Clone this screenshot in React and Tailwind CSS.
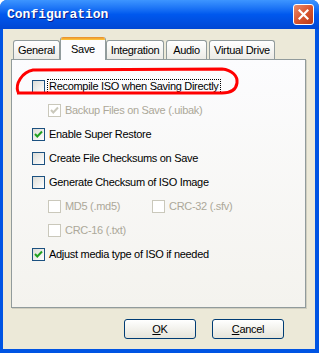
import React from "react";

function Check({ checked, disabled }) {
  return (
    <span
      className={
        "relative flex h-[13px] w-[13px] shrink-0 items-center justify-center border " +
        (disabled
          ? "border-[#CAC8BB] bg-white"
          : "border-[#1C5180] bg-gradient-to-br from-[#DCDCD7] to-[#FFFFFF]")
      }
    >
      {checked && (
        <svg width="11" height="11" viewBox="0 0 11 11">
          <path
            d="M2 5 L4.3 7.5 L9 2.5"
            fill="none"
            stroke={disabled ? "#CAC8BB" : "#21A121"}
            strokeWidth="2"
          />
        </svg>
      )}
    </span>
  );
}

function Row({ label, checked, disabled, focus, indent }) {
  return (
    <div className={"flex h-[24px] items-center whitespace-nowrap " + (indent ? "pl-[36px]" : "pl-[20px]")}>
      <Check checked={checked} disabled={disabled} />
      <span
        className={
          "ml-[2px] px-[1px] leading-[13px] " +
          (disabled ? "text-[#ACA899] " : "text-black ") +
          (focus ? "border border-dotted border-black" : "border border-transparent")
        }
      >
        {label}
      </span>
    </div>
  );
}

function Tab({ label, selected, w, ml }) {
  if (selected) {
    return (
      <div
        className={"relative z-10 -mb-[1px] flex h-[23px] flex-col overflow-hidden rounded-t-[3px] border-x border-[#919B9C] bg-[#FCFCFE] " + ml + " " + w}
      >
        <div className="h-[3px] bg-gradient-to-b from-[#E68B2C] to-[#FFC83C]" />
        <div className="flex flex-1 items-center justify-center pb-[2px]">{label}</div>
      </div>
    );
  }
  return (
    <div
      className={
        "flex h-[19px] items-center justify-center rounded-t-[3px] border-x border-t border-[#919B9C] bg-gradient-to-b from-[#FFFFFF] to-[#ECEBE6] " +
        ml +
        " " +
        w
      }
    >
      {label}
    </div>
  );
}

function Button({ children }) {
  return (
    <div className="flex h-[20px] w-[72px] items-center justify-center rounded-[3px] border border-[#003C74] bg-gradient-to-b from-[#FFFFFF] to-[#E6E4DA] text-black">
      {children}
    </div>
  );
}

export default function App() {
  return (
    <div
      className="relative flex h-[353px] w-[319px] flex-col overflow-hidden rounded-t-[7px] bg-[#0054E3] text-[11px] tracking-[-0.3px]"
      style={{ fontFamily: '"Liberation Sans", Arial, sans-serif' }}
    >
      {/* Title bar */}
      <div className="flex h-[29px] shrink-0 items-center justify-between bg-gradient-to-b from-[#3D95FF] via-[#0058EE] to-[#0047D4] pl-[7px] pr-[5px]">
        <span
          className="pt-[1px] text-[13px] font-bold tracking-normal text-white"
          style={{ fontFamily: '"Liberation Mono", "Courier New", monospace', textShadow: "1px 1px 0 #0A1E8C" }}
        >
          Configuration
        </span>
        <div className="flex h-[21px] w-[21px] items-center justify-center rounded-[3px] border border-white bg-gradient-to-br from-[#E98B6C] via-[#D9552F] to-[#B93A18]">
          <svg width="11" height="11" viewBox="0 0 11 11">
            <path d="M1.5 1.5 L9.5 9.5 M9.5 1.5 L1.5 9.5" stroke="white" strokeWidth="2.2" strokeLinecap="square" />
          </svg>
        </div>
      </div>

      {/* Body */}
      <div className="mb-[4px] ml-[3px] mr-[4px] flex flex-1 flex-col bg-[#ECE9D8] pt-[7px]">
        {/* Tabs */}
        <div className="ml-[10px] flex h-[23px] items-end text-black">
          <Tab label="General" w="w-[47px]" ml="ml-0" />
          <Tab label="Save" selected w="w-[46px]" ml="ml-0" />
          <Tab label="Integration" w="w-[58px]" ml="ml-0" />
          <Tab label="Audio" w="w-[41px]" ml="ml-[2px]" />
          <Tab label="Virtual Drive" w="w-[66px]" ml="ml-[2px]" />
        </div>

        {/* Panel */}
        <div className="ml-[8px] flex h-[249px] w-[295px] flex-col border border-[#919B9C] bg-gradient-to-b from-[#FCFCFE] to-[#F4F3EE] pt-[14px] shadow-[1px_1px_0_#D0CEBF]">
          <Row label="Recompile ISO when Saving Directly" focus />
          <Row label="Backup Files on Save (.uibak)" checked disabled indent />
          <Row label="Enable Super Restore" checked />
          <Row label="Create File Checksums on Save" />
          <Row label="Generate Checksum of ISO Image" />
          <div className="flex">
            <div className="w-[140px] shrink-0">
              <Row label="MD5 (.md5)" disabled indent />
            </div>
            <div className="flex h-[24px] items-center whitespace-nowrap">
              <Check disabled />
              <span className="ml-[2px] border border-transparent px-[1px] leading-[13px] text-[#ACA899]">CRC-32 (.sfv)</span>
            </div>
          </div>
          <Row label="CRC-16 (.txt)" disabled indent />
          <Row label="Adjust media type of ISO if needed" checked />
        </div>

        {/* Buttons */}
        <div className="mt-[11px] flex justify-end gap-[16px] pr-[31px]">
          <Button>
            <span className="underline">O</span>K
          </Button>
          <Button>
            <span className="underline">C</span>ancel
          </Button>
        </div>
      </div>

      {/* Red hand-drawn annotation */}
      <svg className="pointer-events-none absolute left-0 top-0" width="319" height="353" viewBox="0 0 319 353">
        <path
          d="M18 92 C15 84, 22 72, 33 70 L222 69 C232 70, 238 76, 237 83 C236 90, 230 93, 222 93 L17 93"
          fill="none"
          stroke="#FF0000"
          strokeWidth="3"
          strokeLinejoin="round"
        />
      </svg>
    </div>
  );
}
